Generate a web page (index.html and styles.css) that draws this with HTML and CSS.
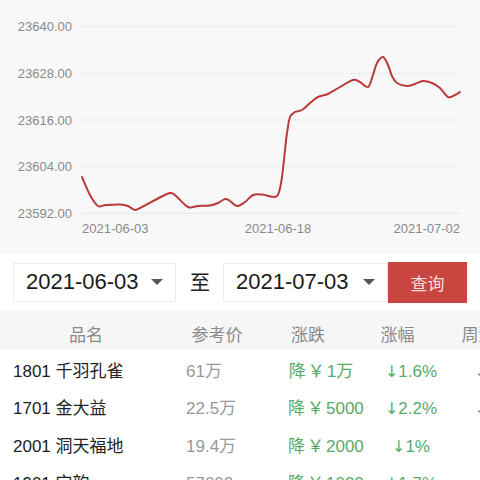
FILE: index.html
```html
<!DOCTYPE html>
<html lang="zh-CN">
<head>
<meta charset="utf-8">
<title>价格走势</title>
<link rel="stylesheet" href="styles.css">
</head>
<body>
<div class="chart">
  <svg class="chart-svg" width="480" height="254" viewBox="0 0 480 254">
    <g class="grid">
      <line x1="82" y1="26.7" x2="459" y2="26.7"/>
      <line x1="82" y1="73.3" x2="459" y2="73.3"/>
      <line x1="82" y1="120" x2="459" y2="120"/>
      <line x1="82" y1="166.7" x2="459" y2="166.7"/>
    </g>
    <line class="axis" x1="82" y1="213.3" x2="460" y2="213.3"/>
    <g class="ylabels">
      <text x="72" y="31.3">23640.00</text>
      <text x="72" y="78">23628.00</text>
      <text x="72" y="124.6">23616.00</text>
      <text x="72" y="171.3">23604.00</text>
      <text x="72" y="218">23592.00</text>
    </g>
    <g class="xlabels">
      <text x="82" y="233" class="start">2021-06-03</text>
      <text x="278" y="233" class="middle">2021-06-18</text>
      <text x="460" y="233" class="end">2021-07-02</text>
    </g>
    <path id="price-line" class="price-line" d=""/>
  </svg>
</div>

<div class="filter">
  <div class="date-box">
    <span class="date-text">2021-06-03</span>
    <span class="caret"></span>
  </div>
  <span class="to">至</span>
  <div class="date-box date-box-2">
    <span class="date-text">2021-07-03</span>
    <span class="caret"></span>
  </div>
  <button class="query">查询</button>
</div>

<div class="table">
  <div class="thead">
    <div class="th">品名</div>
    <div class="th">参考价</div>
    <div class="th">涨跌</div>
    <div class="th">涨幅</div>
    <div class="th">周涨幅</div>
  </div>
  <div class="tbody">
    <div class="tr">
      <div class="td name">1801 千羽孔雀</div>
      <div class="td price">61万</div>
      <div class="td down c3">降<span class="yen">￥</span>1万</div>
      <div class="td down c4"><span class="arrow">↓</span>1.6%</div>
      <div class="td down c5"><span class="arrow">↓</span>1.2%</div>
    </div>
    <div class="tr">
      <div class="td name">1701 金大益</div>
      <div class="td price">22.5万</div>
      <div class="td down c3">降<span class="yen">￥</span>5000</div>
      <div class="td down c4"><span class="arrow">↓</span>2.2%</div>
      <div class="td down c5"><span class="arrow">↓</span>1.5%</div>
    </div>
    <div class="tr">
      <div class="td name">2001 洞天福地</div>
      <div class="td price">19.4万</div>
      <div class="td down c3">降<span class="yen">￥</span>2000</div>
      <div class="td down c4"><span class="arrow">↓</span>1%</div>
      <div class="td down c5"><span class="arrow">↓</span>1%</div>
    </div>
    <div class="tr">
      <div class="td name">1901 宝韵</div>
      <div class="td price">57000</div>
      <div class="td down c3">降<span class="yen">￥</span>1000</div>
      <div class="td down c4"><span class="arrow">↓</span>1.7%</div>
      <div class="td down c5"><span class="arrow">↓</span>1%</div>
    </div>
  </div>
</div>
<script src="script.js"></script>
</body>
</html>
```

FILE: styles.css
```css
* { box-sizing: border-box; }
html, body { margin: 0; padding: 0; }
body {
  width: 480px;
  height: 480px;
  overflow: hidden;
  background: #ffffff;
  font-family: "Liberation Sans", "Noto Sans CJK SC", sans-serif;
  color: #222;
}

.chart {
  height: 254px;
  background: #f8f8f8;
}
.chart-svg { display: block; }
.grid line {
  stroke: #dedede;
  stroke-width: 1;
  stroke-dasharray: 2 2;
}
.axis { stroke: #e4e4e4; stroke-width: 1; }
.ylabels text, .xlabels text {
  font-family: "Liberation Sans", sans-serif;
  font-size: 13px;
  fill: #8a8a8a;
}
.ylabels text { text-anchor: end; }
.xlabels .start { text-anchor: start; }
.xlabels .middle { text-anchor: middle; }
.xlabels .end { text-anchor: end; }
.price-line {
  fill: none;
  stroke: #b83a3c;
  stroke-width: 2;
  stroke-linejoin: round;
  stroke-linecap: round;
}

.filter {
  height: 56px;
  display: flex;
  align-items: center;
  padding: 0 13px;
  background: #fff;
}
.date-box {
  width: 163px;
  height: 39px;
  border: 1px solid #ebebeb;
  background: #fff;
  display: flex;
  align-items: center;
  justify-content: space-between;
  padding: 0 12px 0 12px;
}
.date-box-2 { width: 165px; }
.date-text {
  font-family: "Liberation Sans", sans-serif;
  font-size: 22px;
  color: #1a1a1a;
}
.caret {
  width: 0;
  height: 0;
  border-left: 6px solid transparent;
  border-right: 6px solid transparent;
  border-top: 6px solid #555;
}
.to {
  font-family: "Noto Sans CJK SC", sans-serif;
  font-size: 20px;
  color: #222;
  margin: 0 13px 0 14px;
  line-height: 1;
}
.query {
  width: 79px;
  height: 41px;
  border: none;
  background: #c8463f;
  color: #f6dcda;
  font-family: "Noto Sans CJK SC", sans-serif;
  font-size: 17px;
  padding: 0;
}

.table { width: 480px; overflow: hidden; }
.thead, .tr {
  display: grid;
  grid-template-columns: 172px 90px 92px 87px 92px;
  width: 533px;
}
.thead {
  height: 40px;
  padding-top: 8px;
  background: #f6f6f6;
  align-items: center;
}
.th {
  text-align: center;
  font-family: "Noto Sans CJK SC", sans-serif;
  font-size: 17px;
  color: #8a8a8a;
  white-space: nowrap;
  line-height: 1.3;
}
.tbody { padding-top: 3px; }
.tr {
  height: 37.5px;
  align-items: center;
}
.td {
  font-size: 17px;
  white-space: nowrap;
  line-height: 1.3;
}
.name { padding-left: 13px; color: #222; }
.price { padding-left: 14px; color: #999; }
.down { color: #58aa68; text-align: center; }
.yen { margin: 0 2px; }
.arrow {
  font-family: "DejaVu Sans", sans-serif;
  font-size: 16px;
}
.c3 { padding-left: 26px; }
.c4 { padding-left: 27px; }
.c5 { padding-left: 27px; }
```

FILE: script.js
```js
(function () {
  var pts = [
    [82,177],[90,195],[98,206],[106,205],[120,204.5],[128,206],[135,210],[142,207],
    [155,200],[170,193],[176,196],[188,207],[198,206],[210,205.5],[218,203],[225,199],
    [230,201],[237,206],[245,202],[253,195],[262,194.5],[275,197],[279,192],[282,177],
    [285,150],[287,133],[290,117],[295,112],[302,110],[310,103],[318,97],[328,94],
    [340,87],[353,80],[360,82],[368,87],[373,75],[377,63],[383,57],[388,65],[392,76],
    [397,83],[407,86],[415,84],[423,81],[432,83],[440,88],[448,97],[455,95],[460,92]
  ];
  var d = "M" + pts[0][0] + " " + pts[0][1];
  for (var i = 0; i < pts.length - 1; i++) {
    var p0 = pts[i - 1] || pts[i];
    var p1 = pts[i];
    var p2 = pts[i + 1];
    var p3 = pts[i + 2] || p2;
    var c1x = p1[0] + (p2[0] - p0[0]) / 6;
    var c1y = p1[1] + (p2[1] - p0[1]) / 6;
    var c2x = p2[0] - (p3[0] - p1[0]) / 6;
    var c2y = p2[1] - (p3[1] - p1[1]) / 6;
    d += " C" + c1x.toFixed(2) + " " + c1y.toFixed(2) + " " +
         c2x.toFixed(2) + " " + c2y.toFixed(2) + " " + p2[0] + " " + p2[1];
  }
  document.getElementById("price-line").setAttribute("d", d);
})();
```
